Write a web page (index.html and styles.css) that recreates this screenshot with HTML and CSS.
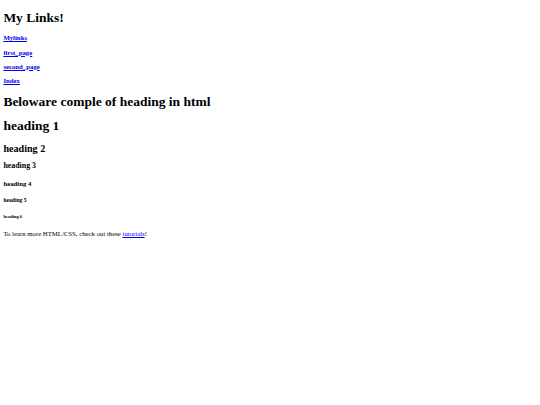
FILE: index.html
```html
<!DOCTYPE html>
<html>
<head>
<meta charset="utf-8">
<title>My Links!</title>
<link rel="stylesheet" href="styles.css">
</head>
<body class="page">
<h1 class="h1 title">My Links!</h1>
<p class="link-row"><b><a class="link" href="#">Mylinks</a></b></p>
<p class="link-row"><b><a class="link" href="#">first_page</a></b></p>
<p class="link-row"><b><a class="link" href="#">second_page</a></b></p>
<p class="link-row"><b><a class="link" href="#">Index</a></b></p>
<h1 class="h1">Beloware comple of heading in html</h1>
<h1 class="h1">heading 1</h1>
<h2 class="h2">heading 2</h2>
<h3 class="h3">heading 3</h3>
<h4 class="h4">heading 4</h4>
<h5 class="h5">heading 5</h5>
<h6 class="h6">heading 6</h6>
<p class="text">To learn more HTML/CSS, check out these <a class="link" href="#">tutorials</a>!</p>
</body>
</html>
```
FILE: styles.css
```css
html { background: #fff; }
.page {
  margin: 3.375px;
  font-family: "Liberation Serif", "Times New Roman", serif;
  font-size: 6.75px;
  line-height: 1.13;
  color: #000;
}
.h1 { font-size: 13.5px; margin: 9.045px 0; font-weight: bold; }
.title { margin-top: 6.5px; }
.h2 { font-size: 10.125px; margin: 8.404px 0; font-weight: bold; }
.h3 { font-size: 7.898px; margin: 7.898px 0; font-weight: bold; }
.h4 { font-size: 6.75px; margin: 8.978px 0; font-weight: bold; }
.h5 { font-size: 5.6025px; margin: 9.357px 0; font-weight: bold; }
.h6 { font-size: 4.5225px; margin: 10.534px 0; font-weight: bold; }
.link-row, .text { font-size: 6.75px; margin: 6.75px 0; }
.link { color: #0000ee; text-decoration: underline; }
```
